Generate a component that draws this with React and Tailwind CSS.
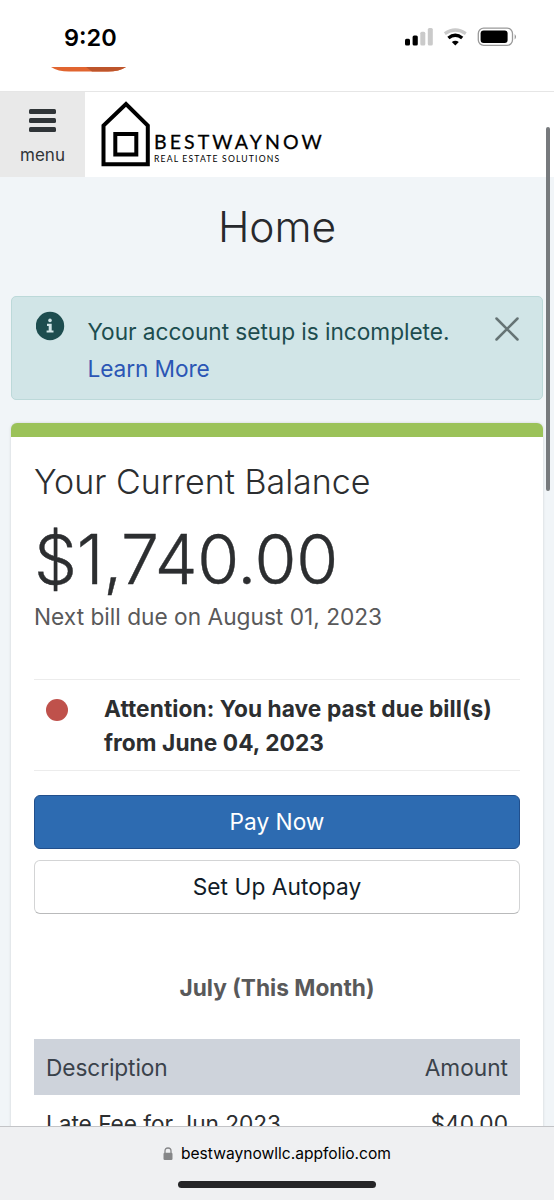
import React from "react";

const StatusBar = () => {
  return (
    <div className="flex h-[67px] shrink-0 justify-between bg-white pl-[64px] pr-[37px]">
      <span className="mt-[23px] h-[30px] text-[23.5px] leading-[30px] font-semibold text-black">9:20</span>
      <svg className="mt-[25px]" width="112" height="24" viewBox="0 0 112 24">
        <rect x="0" y="13.8" width="5" height="6.7" rx="1.5" fill="#000" />
        <rect x="7.6" y="10.6" width="5.2" height="9.9" rx="1.5" fill="#000" />
        <rect x="15.3" y="6.8" width="5" height="13.7" rx="1.5" fill="#cacaca" />
        <rect x="22.8" y="3" width="5" height="17.5" rx="1.5" fill="#cacaca" />
        <path d="M39.8 8.6Q50.3 1.4 60.8 8.6" fill="none" stroke="#cacaca" strokeWidth="3.2" />
        <path d="M43.4 13Q50.3 7.4 57.2 13" fill="none" stroke="#000" strokeWidth="3.4" />
        <path d="M46.8 16.9Q50.3 14.4 53.8 16.9L50.3 20.6Z" fill="#000" />
        <rect x="73.3" y="3.1" width="34.2" height="17.2" rx="5.4" fill="none" stroke="#9a9a9a" strokeWidth="1.3" />
        <rect x="75.6" y="5.4" width="27" height="12.7" rx="3" fill="#000" />
        <path d="M109.7 8.9Q112.2 11.7 109.7 14.5Z" fill="#8c8c8c" />
      </svg>
    </div>
  );
};

const Header = () => {
  return (
    <div className="flex h-[86px] shrink-0 border-t border-[#e6e6e6] bg-white">
      <button className="flex w-[85px] flex-col items-center bg-[#e9e9e9] pt-[17px] text-[#303538]">
        <span className="flex flex-col gap-[4.4px]">
          <span className="h-[4.6px] w-[27px] rounded-[1.5px] bg-[#303538]" />
          <span className="h-[4.6px] w-[27px] rounded-[1.5px] bg-[#303538]" />
          <span className="h-[4.6px] w-[27px] rounded-[1.5px] bg-[#303538]" />
        </span>
        <span className="mt-[12px] text-[17px] leading-[22px]">menu</span>
      </button>
      <svg className="ml-[16px] mt-[9px]" width="50" height="66" viewBox="0 0 50 66" fill="none" stroke="#000" strokeWidth="4">
        <path d="M2.5 63.3V24.6L25 3L46.8 24.6V63.3Z" />
        <rect x="14.3" y="33" width="21" height="20.5" />
      </svg>
      <div className="ml-[3px] flex flex-col pt-[39px] font-[Lato] text-black">
        <span className="h-[22px] text-[19.5px] leading-[22px] tracking-[3.1px] [-webkit-text-stroke:0.3px_#000]">BESTWAYNOW</span>
        <span className="mt-[1px] h-[10px] text-[8.6px] leading-[10px] tracking-[1.17px]">REAL ESTATE SOLUTIONS</span>
      </div>
    </div>
  );
};

const Alert = () => {
  return (
    <div className="mx-[11px] mt-[43px] flex h-[104px] rounded-[5px] border border-[#bcd9d9] bg-[#d1e5e7] pl-[24px] pr-[23px] text-[22.7px] leading-[37px]">
      <svg className="mt-[14px] shrink-0" width="29" height="30" viewBox="0 0 29 30">
        <circle cx="14" cy="15" r="14.2" fill="#1d4d4f" />
        <circle cx="14" cy="9.4" r="1.8" fill="#d1e5e7" />
        <path d="M11 12.8H15.7V19.4H17.5V21.6H10.6V19.4H12.7V15H11Z" fill="#d1e5e7" />
      </svg>
      <div className="ml-[22.5px] flex grow flex-col pt-[16px] whitespace-nowrap">
        <span className="tracking-[-0.05px] text-[#1d4d4f]">Your account setup is incomplete.</span>
        <a className="tracking-[-0.1px] text-[#2b56b5]">Learn More</a>
      </div>
      <svg className="mt-[20px] shrink-0" width="24" height="24" viewBox="0 0 24 24" stroke="#667475" strokeWidth="2.5" strokeLinecap="round">
        <path d="M1.5 1.5L22.5 22.5M22.5 1.5L1.5 22.5" />
      </svg>
    </div>
  );
};

const Balance = () => {
  return (
    <div className="mx-[11px] mt-[23px] h-[760px] shrink-0 rounded-t-[6px] border-t-[14px] border-[#9bc259] bg-white px-[23px] text-[22.7px] text-[#2c2e30] shadow-[0_0_3px_rgba(0,0,0,0.15)]">
      <h2 className="mt-[24.5px] text-[34px] leading-[40px] font-light">Your Current Balance</h2>
      <div className="mt-[20px] h-[74px] text-[68px] leading-[74px] font-light tracking-[-0.3px] [-webkit-text-stroke:0.4px_#2c2e30]">$1,740.00</div>
      <p className="mt-[6px] leading-[30px] text-[#59595a]">Next bill due on August 01, 2023</p>

      <div className="mt-[47px] flex h-[92px] border-y border-[#ececec] pt-[12px]">
        <span className="ml-[11.5px] mt-[7.5px] size-[22px] shrink-0 rounded-full bg-[#bf514b]" />
        <p className="ml-[36.5px] leading-[34px] font-bold tracking-[0.07px] whitespace-nowrap">
          Attention: You have past due bill(s)
          <br />
          from June 04, 2023
        </p>
      </div>

      <button className="mt-[24px] block h-[54px] w-full rounded-[6px] border border-[#214f8c] bg-[#2d6bb1] pt-[2px] text-white">Pay Now</button>
      <button className="mt-[11px] block h-[54px] w-full rounded-[6px] border border-[#d3d4d5] border-b-[#b9babb] bg-white pt-[2px] tracking-[0.05px] text-[#111c28]">Set Up Autopay</button>

      <h3 className="mt-[59px] text-center leading-[30px] font-bold text-[#59595a]">July (This Month)</h3>

      <div className="mt-[36px] flex h-[56px] items-center justify-between bg-[#ced3db] px-[12px] pt-[3px] text-[#3a424b]">
        <span className="tracking-[-0.1px]">Description</span>
        <span>Amount</span>
      </div>
      <div className="flex h-[58px] items-center justify-between px-[12px] pt-[1px]">
        <span className="tracking-[-0.05px]">Late Fee for Jun 2023</span>
        <span>$40.00</span>
      </div>
    </div>
  );
};

const BrowserBar = () => {
  return (
    <div className="absolute inset-x-0 bottom-0 flex h-[74px] flex-col items-center border-t border-[#c3c4c7] bg-[#eff0f2]">
      <div className="mt-[16px] flex h-[22px] items-center gap-[8px]">
        <svg width="10" height="14" viewBox="0 0 10 14">
          <path d="M2 7V4Q2 1 5 1Q8 1 8 4V7" fill="none" stroke="#858688" strokeWidth="1.3" />
          <rect x="0.5" y="5.8" width="9" height="7.2" rx="1.2" fill="#858688" />
        </svg>
        <span className="text-[15.6px] leading-[22px] text-black">bestwaynowllc.appfolio.com</span>
      </div>
      <div className="mt-[16px] h-[7px] w-[198px] rounded-full bg-[#252527]" />
    </div>
  );
};

const App = () => {
  return (
    <div className="relative flex h-[1200px] w-[554px] flex-col overflow-hidden bg-[#f1f5f8] font-['Inter',sans-serif]">
      <StatusBar />
      <div className="flex h-[24px] shrink-0 bg-white pl-[51px]">
        <svg width="75" height="5" viewBox="0 0 75 5">
          <path d="M0 0H75Q68 4.5 57 4.5H18Q7 4.5 0 0Z" fill="#e16530" />
          <path d="M35 0H75Q68 4.5 57 4.5H41Z" fill="#bd552b" />
        </svg>
      </div>
      <Header />
      <h1 className="mt-[24px] h-[52px] shrink-0 text-center text-[42.5px] leading-[52px] font-light tracking-[-0.1px] text-[#27292d]">Home</h1>
      <Alert />
      <Balance />
      <div className="absolute top-[127px] right-[4px] h-[364px] w-[4.5px] rounded-full bg-[#777a7d]" />
      <BrowserBar />
    </div>
  );
};

export default App;
